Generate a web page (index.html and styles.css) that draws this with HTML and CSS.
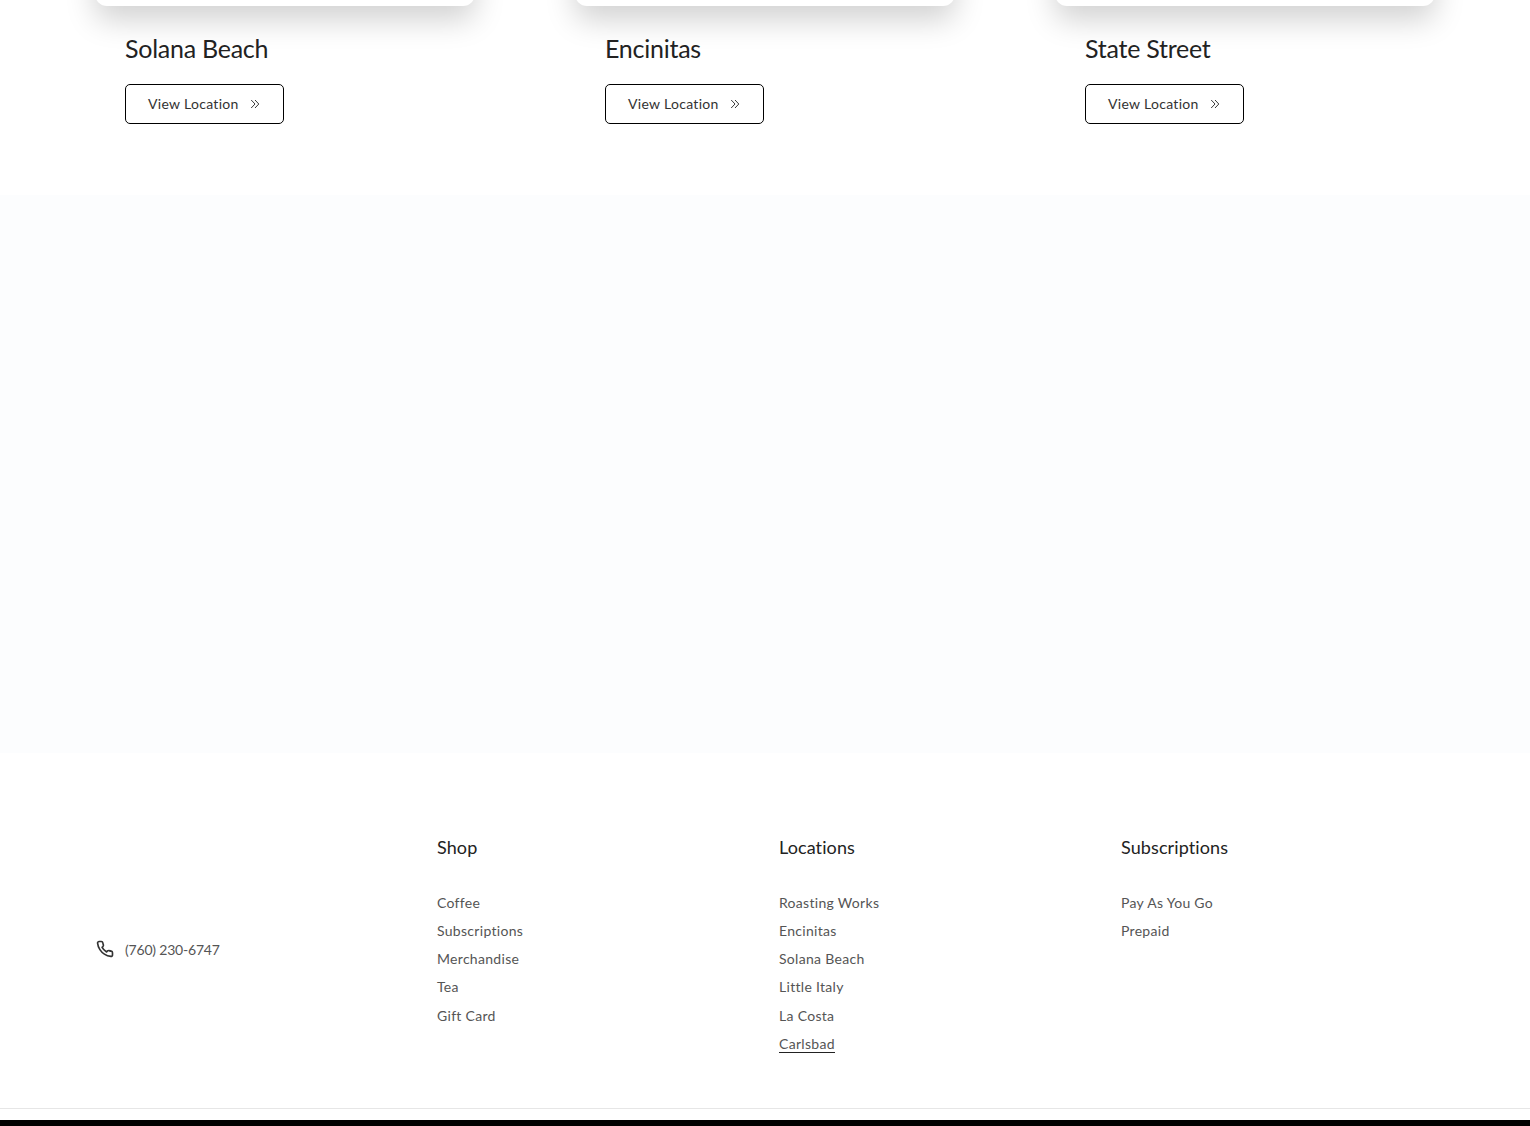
FILE: index.html
```html
<!DOCTYPE html>
<html lang="en">
<head>
<meta charset="utf-8">
<title>Locations</title>
<link rel="stylesheet" href="styles.css">
</head>
<body>
<section class="locations">
  <article class="location">
    <div class="location-photo"></div>
    <h3 class="location-name">Solana Beach</h3>
    <a class="view-btn" href="#">View Location
      <svg class="view-icon" viewBox="0 0 10 10"><path d="M1.2 1 5 5 1.2 9M5 1 8.8 5 5 9"/></svg>
    </a>
  </article>
  <article class="location">
    <div class="location-photo"></div>
    <h3 class="location-name">Encinitas</h3>
    <a class="view-btn" href="#">View Location
      <svg class="view-icon" viewBox="0 0 10 10"><path d="M1.2 1 5 5 1.2 9M5 1 8.8 5 5 9"/></svg>
    </a>
  </article>
  <article class="location">
    <div class="location-photo"></div>
    <h3 class="location-name">State Street</h3>
    <a class="view-btn" href="#">View Location
      <svg class="view-icon" viewBox="0 0 10 10"><path d="M1.2 1 5 5 1.2 9M5 1 8.8 5 5 9"/></svg>
    </a>
  </article>
</section>
<section class="pale-band"></section>
<footer class="footer">
  <div class="footer-grid">
    <div class="contact">
      <svg class="phone-icon" viewBox="0 0 24 24"><path d="M22 16.9v3a2 2 0 0 1-2.2 2 19.8 19.8 0 0 1-8.6-3.1 19.5 19.5 0 0 1-6-6 19.8 19.8 0 0 1-3.1-8.7A2 2 0 0 1 4.1 2h3a2 2 0 0 1 2 1.7c.1 1 .4 1.9.7 2.8a2 2 0 0 1-.5 2.1L8.1 9.9a16 16 0 0 0 6 6l1.3-1.3a2 2 0 0 1 2.1-.4c.9.3 1.8.6 2.8.7a2 2 0 0 1 1.7 2Z"/></svg>
      <span>(760) 230-6747</span>
    </div>
    <nav class="footer-col">
      <h4 class="footer-title">Shop</h4>
      <a href="#">Coffee</a>
      <a href="#">Subscriptions</a>
      <a href="#">Merchandise</a>
      <a href="#">Tea</a>
      <a href="#">Gift Card</a>
    </nav>
    <nav class="footer-col">
      <h4 class="footer-title">Locations</h4>
      <a href="#">Roasting Works</a>
      <a href="#">Encinitas</a>
      <a href="#">Solana Beach</a>
      <a href="#">Little Italy</a>
      <a href="#">La Costa</a>
      <a href="#" class="active">Carlsbad</a>
    </nav>
    <nav class="footer-col">
      <h4 class="footer-title">Subscriptions</h4>
      <a href="#">Pay As You Go</a>
      <a href="#">Prepaid</a>
    </nav>
  </div>
  <div class="footer-rule"></div>
  <div class="footer-bar"></div>
</footer>
</body>
</html>
```
FILE: styles.css
```css
* { box-sizing: border-box; }
html, body { margin: 0; padding: 0; }
body {
  height: 1126px;
  overflow: hidden;
  background: #fff;
  font-family: "Lato", "Noto Sans", sans-serif;
  color: #000;
}
a { color: inherit; text-decoration: none; }

.locations {
  height: 195px;
  padding: 0 95px;
  display: grid;
  grid-template-columns: repeat(3, 380px);
  column-gap: 100px;
}
.location-photo {
  height: 206px;
  margin-top: -200px;
  background: #fff;
  border-radius: 0 0 12px 12px;
  box-shadow: 0 14px 30px rgba(0, 0, 0, .18);
}
.location-name {
  margin: 26px 0 0 30px;
  font-size: 25px;
  line-height: 32px;
  font-weight: 400;
  letter-spacing: -.25px;
  color: #222;
}
.view-btn {
  margin: 20px 0 0 30px;
  width: 159px;
  height: 40px;
  padding: 0 0 2px 22px;
  display: flex;
  align-items: center;
  border: 1px solid #000;
  border-radius: 5px;
  font-size: 14px;
  letter-spacing: .3px;
  color: #333;
}
.view-icon {
  width: 10px;
  height: 10px;
  margin: 2px 0 0 11px;
  fill: none;
  stroke: #222;
  stroke-width: .9;
}

.pale-band { height: 558px; background: #fcfdfe; }

.footer { height: 373px; padding-top: 82px; }
.footer-grid {
  height: 273px;
  padding: 0 95px;
  display: grid;
  grid-template-columns: repeat(4, 342px);
}
.contact {
  padding-top: 105px;
  display: flex;
  align-items: flex-start;
  gap: 11px;
  font-size: 14px;
  line-height: 20px;
  letter-spacing: -.2px;
  color: #555;
}
.phone-icon {
  width: 18px;
  height: 18px;
  margin: 0 0 0 1px;
  fill: none;
  stroke: #333;
  stroke-width: 2.2;
  stroke-linejoin: round;
}
.footer-col { display: flex; flex-direction: column; align-items: flex-start; }
.footer-title {
  margin: 0 0 34px;
  font-size: 18px;
  line-height: 24px;
  font-weight: 400;
  letter-spacing: .1px;
  color: #222;
}
.footer-col a {
  height: 28.15px;
  font-size: 14px;
  line-height: 20px;
  letter-spacing: .3px;
  color: #555;
}
.footer-col a.active {
  height: 19px;
  border-bottom: 1px solid #222;
}
.footer-rule { height: 1px; background: #e6e6e6; }
.footer-bar { height: 6px; margin-top: 11px; background: #000; }
```
